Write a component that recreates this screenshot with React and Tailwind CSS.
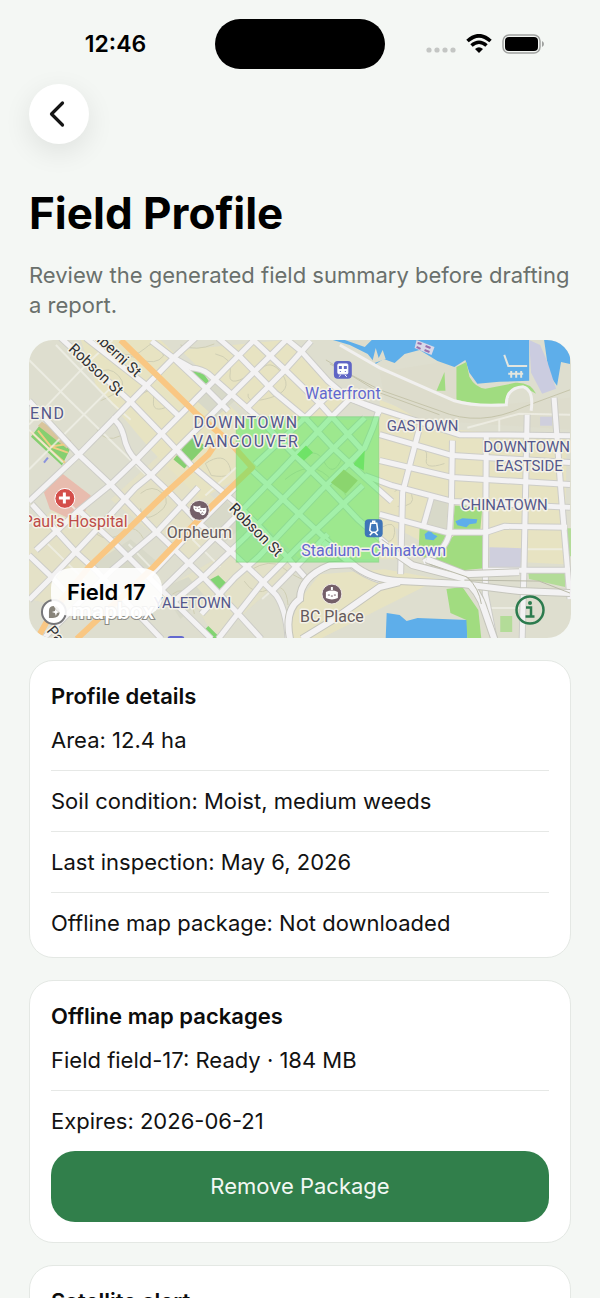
import React from 'react';
import { ChevronLeft } from 'lucide-react';

const CASED_ROADS = [
    // north-west to south-east
    'M60 338L130 402L161 434L191 466L235 503L262 530L305 578',
    'M85 338L145 385L178 416',
    'M111 418Q120 424 123 436Q126 452 136 461L151 476L171 495L198 523L228 550L258 578L276 596Q286 610 288 640',
    'M28 401L78 455L110 485L158 535L203 578L241 618L261 640',
    'M31 505L75 553L95 571L161 640',
    'M78 511L115 545L161 591L211 640',
    'M28 556L51 578L70 598',
    'M151 341L173 358L191 368Q202 369 208 374L258 418L295 456L325 485L358 520L387 545',
    'M173 358L205 388L228 411',
    'M251 470L295 511L338 551L350 565Q364 576 380 581',
    'M218 338L241 358L275 393L305 418L333 448L365 478L392 502',
    'M251 338L285 370L321 405L362 450',
    'M285 338L301 351L328 381L348 398L382 412',
    // south-west to north-east
    'M28 502L78 455L130 402L173 358L195 338',
    'M28 601L51 578L101 525L135 488L151 475L176 450L228 398L268 358L288 338',
    'M35 551L78 511L110 485L135 461L161 434L185 410L231 363L254 340',
    'M44 638L111 571L158 531L198 488',
    'M148 578L198 525L235 488',
    'M161 591L228 525L281 471L331 418L351 398',
    'M175 601L203 578L245 538L311 471L365 418',
    'M201 615L235 578L258 558L321 491L365 448Q374 428 380 408',
    'M218 640L235 618L261 585L305 541L363 486',
    'M245 410L285 370L311 341',
    'M255 465L305 418L332 392',
    'M272 592L328 535',
    // Gastown and Chinatown
    'M347 398L382 410L460 435L571 436',
    'M380 435L453 456L571 463',
    'M380 461L453 478L571 485',
    'M365 476L392 486L453 502L571 508',
    'M380 515L402 521L447 533L487 533L505 527L568 528',
    'M420 428L403 493L401 575',
    'M432 498L424 526',
    'M453 441L452 502L450 534Q446 552 424 563',
    'M487 435L486 595L495 640',
    'M528 415L525 560L523 640',
    'M555 398L562 493L571 600',
    'M486 571L571 571',
];

const MINOR_ROADS = [
    'M28 360L68 400L146 476', 'M55 345L112 404L130 420', 'M28 470L118 380', 'M28 425L88 362L112 340',
    'M28 430L62 463', 'M57 492L84 520', 'M120 340L160 380', 'M42 540L88 585', 'M527 550L568 550',
    'M486 609L523 609', 'M500 420L500 434', 'M468 428L520 414L571 415', 'M510 590L548 590',
    'M205 496L236 468', 'M128 545L150 568', 'M192 540L220 568', 'M262 600L300 566',
];

const CONTOURS = [
    'M118 352q14 8 27 -4t18 8q-8 10 -24 3t-21 6', 'M96 374q12 -9 22 2t-4 18t-14 7', 'M140 395q15 -10 13 5t16 6',
    'M215 354q18 4 15 19t18 3', 'M258 372q12 -15 24 2t-12 24t-22 -4', 'M205 464q18 -12 24 2t-18 10z',
    'M140 494q12 -10 22 0t-5 20t-17 -5', 'M96 535q12 9 26 -2t23 11', 'M172 595q11 -8 16 3t6 17',
    'M250 571q20 -12 32 -3t20 12', 'M285 480q24 -20 42 -4t19 20', 'M395 492q12 -9 17 3t-14 12',
    'M382 528q14 -8 13 5t-13 8', 'M300 462q15 -17 24 0t18 -3', 'M410 444q20 3 17 15t18 5',
    'M180 345q16 7 34 -1', 'M244 582q10 16 26 8t18 16', 'M96 430q9 14 24 6',
];

const district = 'fill-[#54588c] text-[16px]';
const halo = { stroke: '#f4f2e8', strokeWidth: 3, paintOrder: 'stroke', strokeLinejoin: 'round' };

const FieldMap = () => (
    <svg viewBox="28 340 544 299" preserveAspectRatio="xMidYMid slice" className="block w-full font-['Roboto',sans-serif]" role="img" aria-label="Map of downtown Vancouver with Field 17 highlighted">
        <rect x="28" y="340" width="544" height="300" fill="#dedecf" />

        {/* Land shading */}
        <g fill="#e7e3c2">
            <path d="M80 340L160 340L255 430L236 480L200 500L150 450L95 385Z" />
            <path d="M180 350L285 340L350 400L310 430L240 408Z" />
            <path d="M380 400L455 430L568 438L565 565L455 560L380 520Z" />
            <path d="M110 500L165 450L235 520L190 565Z" opacity=".6" />
            <path d="M28 530L70 495L120 545L70 610L28 600Z" opacity=".6" />
            <path d="M300 600L320 575L385 570L440 580L400 600L320 640L285 640Z" />
            <path d="M236 420L380 420L400 560L300 560L236 500Z" />
            <path d="M180 580L250 540L300 560L260 600L215 640Z" opacity=".5" />
        </g>
        <g fill="#d8d9c9">
            <path d="M195 400L218 378L238 398L215 418ZM92 565L130 540L156 562L120 596ZM202 520L225 500L246 524L220 547ZM432 498L448 503L447 530L427 524Z" />
            <path d="M160 590L188 578L205 598L180 620Z" />
        </g>
        <path d="M455 360L500 405L571 398L571 430L420 420L385 400L380 372Z" fill="#dddccc" />

        {/* Water */}
        <g fill="#5eaeea">
            <path d="M333 340L350 345L368 354L376 364L384 359L395 363L405 354L420 350L438 361L455 367L466 360L470 373L478 384L500 382L530 381L530 340Z" />
            <path d="M545 340L550 375L558 386L562 362L571 364L571 340Z" />
            <path d="M387 614L400 616L407 622L418 619L468 621L468 640L386 640Z" />
            <path d="M456 522l7 -3l15 1l-1 4l-7 1l-3 3l-9 -2zM425 535l5 -4l4 4l4 2l-4 4l-8 -1z" />
        </g>
        <path d="M345 340L365 347L372 340ZM372 364l4 -16l3 10l4 -8l3 9" fill="#dddccc" />
        <g stroke="#e3e6df" strokeWidth="2" fill="none">
            <path d="M505 355L509 366L528 366M509 374L524 374M512 371v7M517 371v7M522 371v7" />
        </g>
        <path d="M417 340l18 7l-3 8l-17 -7z" fill="#d9d9e8" />
        <path d="M418 343l4 1M426 346l5 2M417 347l4 2M425 350l5 2" stroke="#9a70ad" strokeWidth="2" />
        <path d="M530 340L541 345L548 361L557 389L543 394L532 373Z" fill="#cbcce0" />
        <path d="M541 417h12v9h-12zM490 548L523 549L521 570L490 570Z" fill="#cfcfdd" />

        {/* Parks */}
        <g fill="#a1dc80">
            <path d="M457 367L467 362L470 377Q476 388 486 389L516 383Q531 382 537 394Q519 383 511 393L507 405L480 405L457 400Z" />
            <path d="M445 372L446 391L437 391ZM455 506L483 508L481 530L454 530Z" />
            <path d="M420 529L449 533Q447 544 455 536L485 535L485 569L463 571L427 560L419 554Z" />
            <path d="M447 590L463 588L479 611L482 640L468 640L467 621L451 614Z" />
            <path d="M529 572L567 573L566 588L530 580ZM501 617h12v16h-12zM568 529h4v28h-4z" opacity=".7" />
            <path d="M190 370L202 372L209 382L204 385ZM207 582l11 -6l8 8l-9 8zM204 631l4 -4l13 13h-9z" fill="#82d473" />
            <path d="M193 435L205 447L184 469L173 460ZM30 437L40 424L70 448L61 466Z" fill="#86cf70" />
        </g>
        <g fill="#5eaeea">
            <path d="M456 522l7 -3l15 1l-1 4l-7 1l-3 3l-9 -2zM425 535l5 -4l4 4l4 2l-4 4l-8 -1z" />
        </g>
        <path d="M37 426L41 422L70 441L66 449Z" fill="#d9c59d" />
        <path d="M37 431L50 447L67 453M30 432L50 451L66 465M50 447L70 444" stroke="#efcd83" strokeWidth="2" fill="none" />
        <path d="M43 493L60 473L90 496L80 525L49 510Z" fill="#e8bcae" />
        <path d="M43 463l4 -5" stroke="#8b93dd" strokeWidth="2" />

        {/* Contour and rail lines */}
        <g fill="none" stroke="#cfceb4" strokeWidth="1">
            {CONTOURS.map((d) => <path key={d} d={d} />)}
        </g>
        <path d="M330 364L380 390L440 411Q480 428 525 407L571 390M326 360L380 393L440 415" stroke="#c5c4ab" strokeWidth="1" fill="none" />

        {/* Streets */}
        <g fill="none" stroke="#f0f0e8" strokeWidth="2" opacity=".75">
            {MINOR_ROADS.map((d) => <path key={d} d={d} />)}
        </g>
        <g fill="none" stroke="#cdcdc8" strokeWidth="7" strokeLinejoin="round">
            {CASED_ROADS.map((d) => <path key={d} d={d} />)}
        </g>
        <g fill="none" stroke="#f3f2f3" strokeWidth="5" strokeLinejoin="round">
            {CASED_ROADS.map((d) => <path key={d} d={d} />)}
        </g>
        <path d="M340 345L380 368L455 401Q475 407 507 405Q507 388 524 387Q535 390 532 411" stroke="#f1f0ef" strokeWidth="3" fill="none" />

        {/* Viaducts */}
        {[['#c5c5bc', 8], ['#f3f2f3', 6]].map(([color, width]) => (
            <g key={color} stroke={color} strokeWidth={width} fill="none">
                <path d="M323 543L353 565Q370 580 400 582L463 585L520 592L571 594" />
                <path d="M380 543L413 566L463 579Q480 592 485 611L495 640" />
                <path d="M427 560L465 575L520 573" />
                <path d="M290 640Q284 611 300 600Q300 578 330 566L353 565" />
                <path d="M302 640L333 621L380 588L400 583" />
            </g>
        ))}
        <path d="M430 565L468 578Q480 590 482 605M465 581L540 582L571 594" stroke="#b9b9a8" strokeWidth="1" fill="none" />
        <g stroke="#f9c783" strokeWidth="6" fill="none" strokeLinejoin="round">
            <path d="M120 340L195 413L228 441L252 468L210 508L153 568L76 640" />
            <path d="M218 440L208 455L166 493L88 568L52 612L36 640" />
        </g>

        {/* Field boundary */}
        <rect x="236" y="417" width="143" height="146" fill="#43ed50" fillOpacity=".45" stroke="#7fcf7c" strokeOpacity=".5" />
        <path d="M297 455l9 -9l7 7l-9 8zM354 464l11 -13l-1 20l-9 -5z" fill="#6fe367" />
        <path d="M331 483l13 -13l14 11l-12 13z" fill="#8bd56e" />

        {/* District labels */}
        <g style={halo} className={district}>
            <text x="29" y="419" className="tracking-widest">END</text>
            <text x="246" y="428" textAnchor="middle" className="tracking-widest">DOWNTOWN</text>
            <text x="246" y="447" textAnchor="middle" className="tracking-widest">VANCOUVER</text>
            <text x="423" y="431" textAnchor="middle" className="text-[15px]">GASTOWN</text>
            <text x="484" y="452" className="text-[15px]">DOWNTOWN</text>
            <text x="530" y="471" textAnchor="middle" className="text-[15px]">EASTSIDE</text>
            <text x="505" y="511" textAnchor="middle" className="text-[15px]">CHINATOWN</text>
            <text x="231" y="609" textAnchor="end" className="text-[15px]">YALETOWN</text>
        </g>

        {/* Street labels */}
        <g style={halo} fill="#2f3033" fontSize="15">
            <text transform="translate(67 350) rotate(43)">Robson St</text>
            <text transform="translate(88 334) rotate(43)">Alberni St</text>
            <text transform="translate(228 510) rotate(45)">Robson St</text>
            <text transform="translate(45 632) rotate(50)">Pacific St</text>
        </g>

        {/* Places */}
        <g style={halo} fontSize="16" textAnchor="middle">
            <text x="343" y="399" fill="#6268cf">Waterfront</text>
            <text x="374" y="557" fill="#6268cf">Stadium–Chinatown</text>
            <text x="127" y="528" textAnchor="end" fill="#bd4c48">St. Paul's Hospital</text>
            <text x="199" y="539" fill="#655a5c">Orpheum</text>
            <text x="332" y="623" fill="#655a5c">BC Place</text>
        </g>
        <rect x="334" y="361" width="18" height="18" rx="4" fill="#6065c5" />
        <path d="M339 364h8a1 1 0 0 1 1 1v8a1 1 0 0 1 -1 1h-8a1 1 0 0 1 -1 -1v-8a1 1 0 0 1 1 -1zM339 377l2 -2M347 377l-2 -2" fill="#fff" stroke="#fff" />
        <path d="M339 366h3v3h-3zM344 366h3v3h-3zM340 371h1v1h-1zM345 371h1v1h-1z" fill="#6065c5" />
        <rect x="365" y="520" width="18" height="18" rx="4" fill="#3f75b8" />
        <path d="M371 524h6l1 7l-2 2h-4l-2 -2zM373 522h2v2h-2zM370 536l3 -3M378 536l-3 -3" fill="none" stroke="#fff" strokeWidth="1.5" />
        <circle cx="64" cy="499" r="10" fill="#d44e4a" stroke="#fff" strokeWidth="1" />
        <path d="M62 493h3v4h4v3h-4v4h-3v-4h-4v-3h4z" fill="#fff" />
        <circle cx="199" cy="511" r="10" fill="#745f69" stroke="#eee8e4" strokeWidth="1" />
        <path d="M193 506q4 2 7 0v2q3 1 6 0v4q-1 4 -4 4q-2 -1 -3 -3q-5 0 -6 -4z" fill="#fff" />
        <path d="M195 509h1M198 509h1M200 511h1M203 511h1M201 514q1 -1 2 0" stroke="#745f69" fill="none" />
        <circle cx="332" cy="595" r="10" fill="#745f69" stroke="#eee8e4" strokeWidth="1" />
        <path d="M326 593q6 -3 12 0v6q-6 3 -12 0zM331 588h2v3h-2z" fill="#fff" />
        <path d="M328 596h2M331 597h2M334 596h2" stroke="#745f69" strokeWidth="1" />
        <rect x="167" y="637" width="17" height="10" rx="3" fill="#6268cf" />

        {/* Map attribution */}
        <circle cx="53" cy="613" r="12" fill="#fff" stroke="#77777a" strokeWidth="2" />
        <path d="M48 619V612Q48 607 53 607Q59 608 59 613Q58 619 52 619Z" fill="#88847a" />
        <path d="M55 609l1 3l3 1l-3 1l-1 3l-1 -3l-3 -1l3 -1z" fill="#fff" />
        <text x="71" y="620" fontSize="23" fontWeight="500" fill="#fff" stroke="#8a8a85" strokeWidth="2" style={{ paintOrder: 'stroke' }}>mapbox</text>
    </svg>
);

const StatusBar = () => (
    <div className="grid grid-cols-[1fr_170px_1fr] items-center pt-[19px]">
        <span className="pl-4 text-center text-[23px] leading-7 font-semibold text-black">12:46</span>
        <div className="h-[50px] rounded-full bg-black" />
        <div className="flex items-center justify-center gap-[10px] pr-4">
            <svg width="30" height="20" viewBox="0 0 30 20" fill="#c4c6c4" aria-hidden="true">
                <circle cx="3" cy="16" r="2.6" /><circle cx="11" cy="16" r="2.6" /><circle cx="19" cy="16" r="2.6" /><circle cx="27" cy="16" r="2.6" />
            </svg>
            <svg width="26" height="20" viewBox="0 0 26 20" aria-hidden="true">
                <path d="M1.5 7Q13 -3.5 24.5 7M5.5 11.5Q13 5 20.5 11.5" fill="none" stroke="#000" strokeWidth="3.6" />
                <path d="M13 19L9 15Q13 11.5 17 15Z" fill="#000" />
            </svg>
            <svg width="42" height="20" viewBox="0 0 42 20" aria-hidden="true">
                <rect x="1" y="1" width="37" height="18" rx="6" fill="none" stroke="#9fa19f" strokeWidth="1.5" />
                <rect x="3" y="3" width="33" height="14" rx="4" fill="#000" />
                <path d="M40 7Q42 8 42 10T40 13Z" fill="#9fa19f" />
            </svg>
        </div>
    </div>
);

const Card = ({ title, rows = [], children }) => (
    <section className="rounded-3xl border border-[#e4e8e4] bg-white px-[21px] pt-[21px] pb-5">
        <h2 className="text-[22px] leading-7 font-semibold text-[#0c0c0c]">{title}</h2>
        <ul className="mt-4 divide-y divide-[#e6e8e6]">
            {rows.map((row) => (
                <li key={row} className="py-4 text-[22px] leading-7 text-[#121212] first:pt-0 last:pb-0">{row}</li>
            ))}
        </ul>
        {children}
    </section>
);

const App = () => (
    <div className="h-screen overflow-y-auto bg-[#f4f7f4] font-['Inter',sans-serif] [scrollbar-width:none]">
        <StatusBar />

        <main className="px-[29px] pt-[15px]">
            <button type="button" aria-label="Back" className="flex size-[60px] items-center justify-center rounded-full bg-white shadow-[0_8px_28px_rgba(0,0,0,0.09)]">
                <ChevronLeft size={44} strokeWidth={1.75} className="mr-1 text-[#151515]" />
            </button>

            <h1 className="mt-10 text-[44px] leading-[58px] font-bold text-black">Field Profile</h1>
            <p className="mt-[18px] text-[22px] leading-[30px] text-[#6a706c]">
                Review the generated field summary before drafting a report.
            </p>

            <div className="relative mt-5 overflow-hidden rounded-3xl">
                <FieldMap />
                <span className="absolute bottom-[22px] left-[22px] rounded-[20px] bg-white/90 px-4 py-[10px] text-[22px] leading-7 font-semibold text-black">Field 17</span>
                <button type="button" aria-label="Map information" className="absolute right-[26px] bottom-[13px]">
                    <svg width="30" height="30" viewBox="0 0 30 30" fill="none" stroke="#2c7b4e" strokeWidth="2.5">
                        <circle cx="15" cy="15" r="13.5" />
                        <path d="M11 12.5h5v9M10.5 21.5h9" />
                        <circle cx="15" cy="8" r="2" fill="#2c7b4e" stroke="none" />
                    </svg>
                </button>
            </div>

            <div className="mt-[22px] flex flex-col gap-[22px] pb-8">
                <Card
                    title="Profile details"
                    rows={[
                        'Area: 12.4 ha',
                        'Soil condition: Moist, medium weeds',
                        'Last inspection: May 6, 2026',
                        'Offline map package: Not downloaded',
                    ]}
                />
                <Card title="Offline map packages" rows={['Field field-17: Ready · 184 MB', 'Expires: 2026-06-21']}>
                    <button type="button" className="mt-4 h-[71px] w-full rounded-3xl bg-[#317f4b] text-[22px] leading-7 text-[#f2f8f3]">Remove Package</button>
                </Card>
                <Card title="Satellite alert" />
            </div>
        </main>
    </div>
);

export default App;
